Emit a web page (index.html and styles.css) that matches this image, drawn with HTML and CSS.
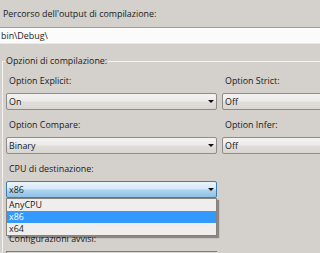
FILE: index.html
```html
<!DOCTYPE html>
<html>
<head>
<meta charset="utf-8">
<link rel="stylesheet" href="styles.css">
</head>
<body>
<div class="page">
  <div class="path-label">Percorso dell'output di compilazione:</div>
  <div class="path-box">bin\Debug\</div>
  <fieldset class="group">
    <legend>Opzioni di compilazione:</legend>
    <div class="grid">
      <div class="field">
        <div class="label">Option Explicit:</div>
        <div class="combo"><span class="value">On</span><i class="arrow"></i></div>
      </div>
      <div class="field">
        <div class="label">Option Strict:</div>
        <div class="combo"><span class="value">Off</span><i class="arrow"></i></div>
      </div>
      <div class="field">
        <div class="label">Option Compare:</div>
        <div class="combo"><span class="value">Binary</span><i class="arrow"></i></div>
      </div>
      <div class="field">
        <div class="label">Option Infer:</div>
        <div class="combo"><span class="value">Off</span><i class="arrow"></i></div>
      </div>
      <div class="field cpu">
        <div class="label">CPU di destinazione:</div>
        <div class="combo open"><span class="value">x86</span><i class="arrow"></i></div>
        <ul class="list">
          <li>AnyCPU</li>
          <li class="selected">x86</li>
          <li>x64</li>
        </ul>
      </div>
      <div class="field"></div>
      <div class="field warn">
        <div class="label">Configurazioni avvisi:</div>
        <div class="warn-box"></div>
      </div>
    </div>
  </fieldset>
</div>
</body>
</html>
```

FILE: styles.css
```css
html, body {
  margin: 0;
  padding: 0;
  width: 320px;
  height: 253px;
  overflow: hidden;
  background: #d4d0cb;
}

.page {
  font-family: "Open Sans", "Noto Sans", sans-serif;
  font-size: 8.9px;
  color: #1a1a1a;
  width: 320px;
  height: 253px;
  overflow: hidden;
}

.path-label {
  padding: 8px 0 0 3px;
  height: 19px;
  line-height: 12px;
  white-space: nowrap;
}

.path-box {
  border-top: 1px solid #a29e9a;
  border-bottom: 1px solid #ebe9e6;
  background: #fbfbfb;
  height: 15px;
  line-height: 15px;
  padding-left: 1px;
}

.group {
  margin: 11px 0 0 2px;
  padding: 8px 0 0 3px;
  border: 1px solid #f3f2f0;
  border-right: none;
  border-bottom: none;
  width: 400px;
  min-width: 0;
  height: 300px;
  box-sizing: border-box;
}

.group legend {
  padding: 0 1px;
  margin-left: -1px;
  line-height: 12px;
  white-space: nowrap;
}

.grid {
  display: grid;
  grid-template-columns: 211px 211px;
  column-gap: 5px;
  row-gap: 9px;
}

.field {
  position: relative;
}

.label {
  padding-left: 3px;
  line-height: 12px;
  height: 12px;
  margin-bottom: 6px;
  white-space: nowrap;
}

.combo {
  display: flex;
  align-items: center;
  height: 15px;
  border: 1px solid #8e8b88;
  border-radius: 2px;
  padding-left: 2px;
  background: linear-gradient(#f4f3f2, #ecebe9 45%, #e0ddda 55%, #d9d6d2);
  line-height: 15px;
}

.combo .value {
  flex: 1;
}

.arrow {
  width: 0;
  height: 0;
  border-left: 3px solid transparent;
  border-right: 3px solid transparent;
  border-top: 3px solid #111;
  margin-right: 2px;
}

.combo.open {
  border-color: #3f7eae;
  background: linear-gradient(#eaf4fc, #d6e9f8 45%, #aed4ef 55%, #8dc1e6);
}

.cpu {
  padding-bottom: 26px;
}

.list {
  position: absolute;
  top: 35px;
  left: 0;
  width: 211px;
  box-sizing: border-box;
  margin: 0;
  padding: 0;
  list-style: none;
  background: #f0eeec;
  border: 1px solid #858280;
  box-shadow: 2px 2px 1px rgba(0, 0, 0, 0.35);
  z-index: 2;
}

.list li {
  height: 12px;
  line-height: 12px;
  padding-left: 2px;
}

.list li.selected {
  background: #3399ff;
  color: #fff;
}

.warn-box {
  height: 20px;
  border-top: 1px solid #7f7c79;
  border-left: 1px solid #7f7c79;
  background: #d8d5d1;
}
```
